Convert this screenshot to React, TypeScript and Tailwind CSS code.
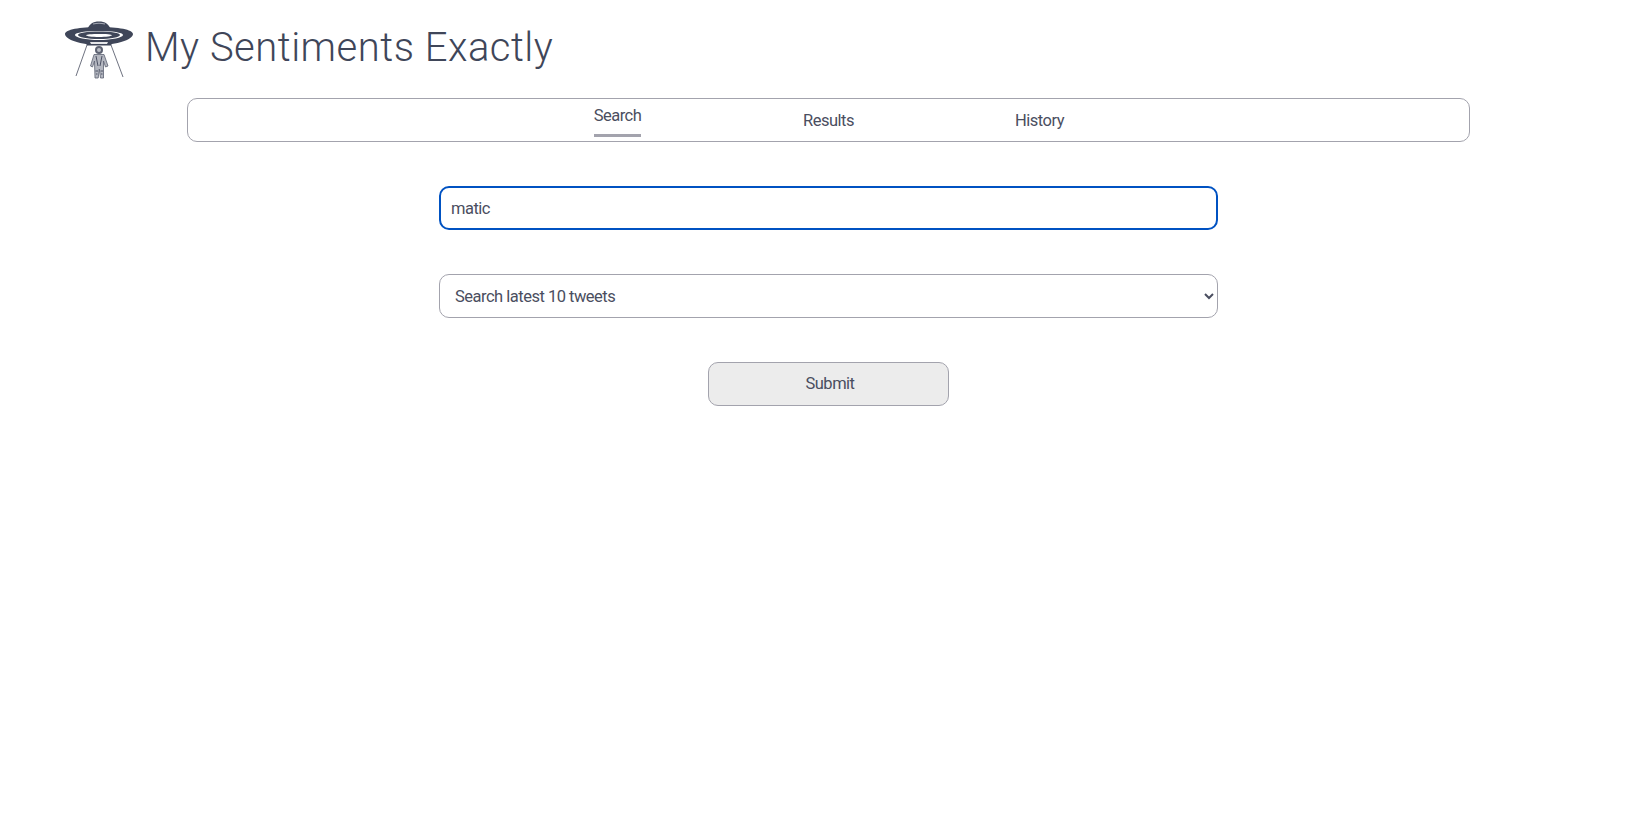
import React from "react";

function Logo() {
  return (
    <svg width="72" height="60" viewBox="0 0 72 60" className="shrink-0">
      <path d="M24 10 C26 4 30 1.500 36 1.500 C42 1.500 46 4 48 10 Z" fill="#3f4659" />
      <path d="M30 4 C34 3 38 3 42 4" stroke="#a4a8b3" strokeWidth="1.100" fill="none" />
      <path fillRule="evenodd" d="M36 7 C55 7 70 9.500 70 14 C70 19.500 54 25 36 25 C18 25 2 19.500 2 14 C2 9.500 17 7 36 7 Z M36 11 C23 11 12 12.500 12 15 C12 17.500 23 20 36 20 C49 20 60 17.500 60 15 C60 12.500 49 11 36 11 Z" fill="#3f4659" />
      <path fillRule="evenodd" d="M36 11.500 C48 11.500 57 13 57 15 C57 17 48 19 36 19 C24 19 15 17 15 15 C15 13 24 11.500 36 11.500 Z M36 14 C29 14 23 14.500 23 15.300 C23 16.100 29 17 36 17 C43 17 49 16.100 49 15.300 C49 14.500 43 14 36 14 Z" fill="#3f4659" />
      <path d="M22 21 L50 21 L48 25.500 L24 25.500 Z" fill="#3f4659" />
      <path d="M27 22 L45 22 L44 24 L28 24 Z" fill="#e6e7ea" />
      <path d="M24 25 L13 56 M48 25 L60 57" stroke="#5d6272" strokeWidth="0.9" fill="none" />
      <circle cx="36" cy="30" r="4" fill="#5d6272" />
      <circle cx="36" cy="30" r="2" fill="#b9bcc4" />
      <path d="M31 34.500 L41 34.500 L45 46 L42.500 47 L40.500 41 L40.500 48 L40.500 58 L37.500 58 L36.300 49 L35.200 58 L32 58 L31.700 48 L31.500 41 L29.500 47 L27.500 46 Z" fill="#b4b7c0" stroke="#5d6272" strokeWidth="0.8" />
      <path d="M33 36 L35 46 M39 36 L37 46 M32.500 51 L35 51 M37.500 51 L40 51 M33 54 L34.500 54 M38 54 L39.500 54" stroke="#3f4659" strokeWidth="0.9" fill="none" />
    </svg>
  );
}

const box = "rounded-[10px] border border-[#a3a3ad] bg-white";
const label = "text-[16.5px] leading-[20px] tracking-[-0.5px]";

export default function App() {
  return (
    <div className="min-h-[836px] bg-white text-[#4a4e60] font-['Roboto',sans-serif]">
      <header className="flex h-[98px] items-start pl-[63px] pt-[20px]">
        <Logo />
        <h1 className="ml-[10px] mt-[2px] text-[40px] font-light leading-[52px] tracking-[0.5px] text-[#3f4659]">
          My Sentiments Exactly
        </h1>
      </header>
      <main className="flex flex-col items-start pl-[187px]">
        <nav className={`flex h-[44px] w-[1283px] justify-center ${box}`}>
          <div className="flex w-[211px] justify-center">
            <div className="flex h-[38px] flex-col items-center border-b-[3px] border-[#a3a3ad] pt-[7px]">
              <span className={label}>Search</span>
            </div>
          </div>
          <div className="flex w-[211px] items-center justify-center pt-[1px]">
            <span className={label}>Results</span>
          </div>
          <div className="flex w-[211px] items-center justify-center pt-[1px]">
            <span className={label}>History</span>
          </div>
        </nav>
        <form className="ml-[252px] mt-[44px] flex w-[779px] flex-col items-center gap-[44px]">
          <input
            readOnly
            value="matic"
            className={`h-[44px] w-full rounded-[10px] border-[2.5px] border-[#0052c2] bg-white pl-[10px] text-[#4a4e60] outline-none ${label}`}
          />
          <select className={`h-[44px] w-full rounded-[10px] border border-[#a3a3ad] bg-white pl-[11px] pr-[2px] text-[#4a4e60] outline-none ${label}`}>
            <option>Search latest 10 tweets</option>
          </select>
          <button
            type="button"
            className={`h-[44px] w-[241px] rounded-[10px] border border-[#a3a3ad] bg-[#ececec] pl-[3px] text-[#4a4e60] ${label}`}
          >
            Submit
          </button>
        </form>
      </main>
    </div>
  );
}
